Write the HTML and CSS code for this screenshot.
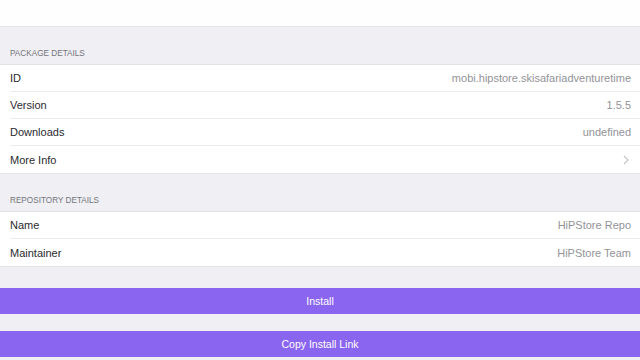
FILE: index.html
```html
<!DOCTYPE html>
<html lang="en">
<head>
  <meta charset="UTF-8">
  <title>Package Details</title>
  <link rel="stylesheet" href="styles.css">
</head>
<body>

  <div class="top"></div>

  <div class="section-title">Package Details</div>
  <ul class="group">
    <li><span>ID</span><span class="value">mobi.hipstore.skisafariadventuretime</span></li>
    <li><span>Version</span><span class="value">1.5.5</span></li>
    <li><span>Downloads</span><span class="value">undefined</span></li>
    <li>
      <span>More Info</span>
      <svg class="chevron" width="6" height="10" viewBox="0 0 6 10">
        <path d="M1 1l4 4-4 4" fill="none" stroke="#c7c7cc" stroke-width="1.2"/>
      </svg>
    </li>
  </ul>

  <div class="section-title">Repository Details</div>
  <ul class="group">
    <li><span>Name</span><span class="value">HiPStore Repo</span></li>
    <li><span>Maintainer</span><span class="value">HiPStore Team</span></li>
  </ul>

  <div class="buttons">
    <button class="action">Install</button>
    <button class="action">Copy Install Link</button>
  </div>

</body>
</html>
```

FILE: styles.css
```css
body {
  margin: 0;
  background: #efeff4;
  font-family: 'Liberation Sans', Arial, sans-serif;
  color: #2a2a2e;
}
.top {
  height: 27px;
  background: #fefeff;
  border-bottom: 1px solid #e4e4ea;
  box-sizing: border-box;
}
.section-title {
  height: 37px;
  padding: 0 10px 6px;
  box-sizing: border-box;
  display: flex;
  align-items: flex-end;
  font-size: 8.2px;
  text-transform: uppercase;
  color: #75757a;
}
.group {
  list-style: none;
  margin: 0;
  padding: 0;
  background: #fff;
  border-top: 1px solid #e2e2e6;
  border-bottom: 1px solid #e2e2e6;
}
.group li {
  height: 27px;
  margin-left: 10px;
  padding-right: 9px;
  display: flex;
  justify-content: space-between;
  align-items: center;
  font-size: 11px;
  border-bottom: 1px solid #ececef;
  box-sizing: border-box;
}
.group li:last-child {
  border-bottom: none;
}
.value {
  color: #939398;
}
.chevron {
  margin-right: 2px;
}
.buttons {
  padding-top: 21px;
  display: flex;
  flex-direction: column;
  gap: 17px;
}
.action {
  height: 26px;
  border: none;
  background: #8a65ef;
  color: #fff;
  font-family: 'Liberation Sans', Arial, sans-serif;
  font-size: 10.5px;
  padding: 0;
}
```
